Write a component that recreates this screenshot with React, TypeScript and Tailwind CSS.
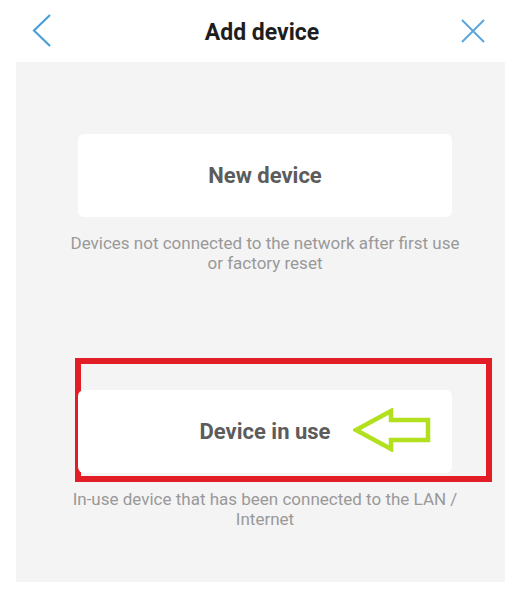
import { ReactNode } from "react";

function OptionCard({ title, children }: { title: string; children?: ReactNode }) {
  return (
    <div className="relative flex h-[83px] w-[374px] items-center justify-center rounded-md bg-white">
      <span className="text-[22px] font-bold text-[#5c5c5c]">{title}</span>
      {children}
    </div>
  );
}

export default function App() {
  return (
    <div
      className="flex h-[589px] w-[522px] flex-col bg-white"
      style={{ fontFamily: "Roboto, 'Noto Sans', sans-serif" }}
    >
      <header className="flex h-[62px] items-center pl-[32px] pr-[36px]">
        <svg width="20" height="34" viewBox="0 0 20 34">
          <path d="M18 1 L2 16.5 L18 32" fill="none" stroke="#4a9fd8" strokeWidth="2.2" />
        </svg>
        <h1 className="mt-[4px] flex-1 pl-[12px] text-center text-[23px] font-bold text-[#1e1e1e]">
          Add device
        </h1>
        <svg width="26" height="24" viewBox="0 0 26 24">
          <path d="M2 1 L24 23 M24 1 L2 23" fill="none" stroke="#5aa6dd" strokeWidth="2" />
        </svg>
      </header>

      <main className="ml-[16px] flex h-[520px] w-[489px] flex-col bg-[#f4f4f4] pt-[72px]">
        <div className="ml-[62px]">
          <OptionCard title="New device" />
        </div>
        <p className="ml-[29px] mt-[16px] w-[440px] text-center text-[17px] leading-[20px] text-[#999999]">
          Devices not connected to the network after first use
          <br />
          or factory reset
        </p>

        <div className="ml-[59px] mt-[85px] h-[124px] w-[417px] border-[6px] border-[#e31d25] pt-[26px]">
          <div className="ml-[-3px]">
            <OptionCard title="Device in use">
              <svg
                width="80"
                height="44"
                viewBox="0 0 80 44"
                className="absolute left-[275px] top-[18px]"
              >
                <path
                  d="M3 22 L38 3 L38 12 L75 12 L75 32 L38 32 L38 41 Z"
                  fill="none"
                  stroke="#b3e01e"
                  strokeWidth="4.5"
                />
              </svg>
            </OptionCard>
          </div>
        </div>
        <p className="ml-[29px] mt-[7px] w-[440px] text-center text-[17px] leading-[20px] text-[#999999]">
          In-use device that has been connected to the LAN /
          <br />
          Internet
        </p>
      </main>
    </div>
  );
}
